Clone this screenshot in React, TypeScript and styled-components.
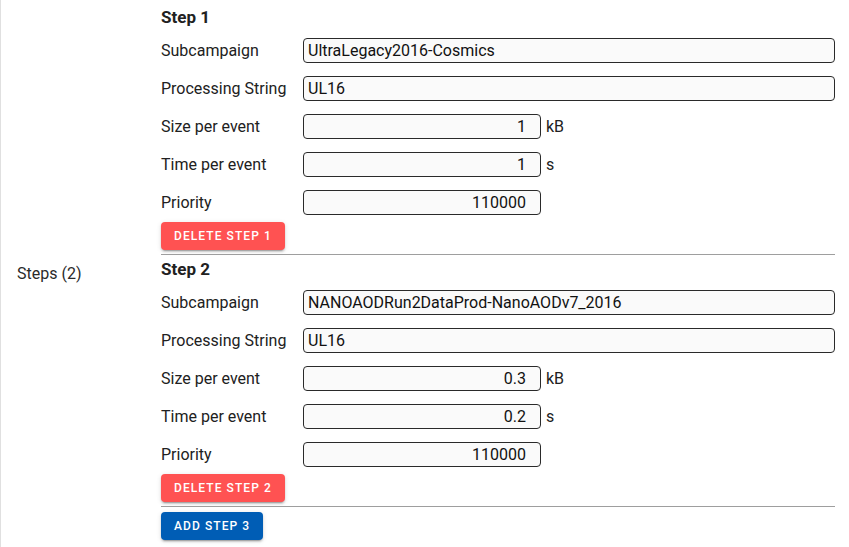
import React from "react";
import styled, { createGlobalStyle } from "styled-components";

const Global = createGlobalStyle`
  html, body { margin: 0; padding: 0; background: #fff; }
  body { font-family: Roboto, "Liberation Sans", sans-serif; color: rgba(0,0,0,0.87); }
`;

const Page = styled.div`
  display: flex;
  align-items: center;
  width: 849px;
  min-height: 547px;
  box-sizing: border-box;
  border-left: 1px solid #e0e0e0;
`;

const SideLabel = styled.div`
  width: 160px;
  box-sizing: border-box;
  padding-left: 16px;
  font-size: 16px;
  color: #2a2a2a;
`;

const Content = styled.div`
  align-self: flex-start;
  width: 674px;
  display: flex;
  flex-direction: column;
  padding-top: 3px;
`;

const Step = styled.div`
  display: flex;
  flex-direction: column;
`;

const StepTitle = styled.div`
  height: 28px;
  display: flex;
  align-items: center;
  font-size: 17px;
  font-weight: 700;
  color: #212121;
`;

const Row = styled.div`
  height: 38px;
  display: flex;
  align-items: center;
`;

const Label = styled.div`
  width: 142px;
  font-size: 16px;
  color: #212121;
`;

const Input = styled.input<{ $short?: boolean }>`
  box-sizing: border-box;
  width: ${(p) => (p.$short ? "238px" : "532px")};
  height: 25px;
  border: 1px solid #2a2a2a;
  border-radius: 4px;
  background: #fafafa;
  font-family: Roboto, "Liberation Sans", sans-serif;
  font-size: 16px;
  color: #111;
  padding: 0 4px;
  text-align: ${(p) => (p.$short ? "right" : "left")};
  padding-right: ${(p) => (p.$short ? "14px" : "4px")};
  outline: none;
`;

const Unit = styled.span`
  margin-left: 5px;
  font-size: 16px;
  color: #212121;
`;

const Button = styled.button<{ $color: string }>`
  align-self: flex-start;
  height: 28px;
  padding: 0 13px;
  border: none;
  border-radius: 4px;
  background: ${(p) => p.$color};
  color: #fff;
  font-family: Roboto, "Liberation Sans", sans-serif;
  font-size: 12px;
  font-weight: 500;
  letter-spacing: 0.09em;
  text-transform: uppercase;
  box-shadow: 0 3px 1px -2px rgba(0,0,0,0.2), 0 2px 2px 0 rgba(0,0,0,0.14), 0 1px 5px 0 rgba(0,0,0,0.12);
  cursor: pointer;
`;

const DeleteButton = styled(Button)`
  margin-top: 1px;
`;

const Divider = styled.hr`
  margin: 4px 0 0;
  border: none;
  border-top: 1px solid #9e9e9e;
  height: 0;
`;

const AddButton = styled(Button)`
  margin-top: 5px;
`;

type StepData = {
  sub: string;
  ps: string;
  size: string;
  time: string;
  priority: string;
};

const steps: StepData[] = [
  { sub: "UltraLegacy2016-Cosmics", ps: "UL16", size: "1", time: "1", priority: "110000" },
  { sub: "NANOAODRun2DataProd-NanoAODv7_2016", ps: "UL16", size: "0.3", time: "0.2", priority: "110000" },
];

export default function App() {
  return (
    <>
      <Global />
      <Page>
        <SideLabel>Steps (2)</SideLabel>
        <Content>
          {steps.map((s, i) => (
            <Step key={i}>
              <StepTitle>Step {i + 1}</StepTitle>
              <Row>
                <Label>Subcampaign</Label>
                <Input defaultValue={s.sub} />
              </Row>
              <Row>
                <Label>Processing String</Label>
                <Input defaultValue={s.ps} />
              </Row>
              <Row>
                <Label>Size per event</Label>
                <Input $short defaultValue={s.size} />
                <Unit>kB</Unit>
              </Row>
              <Row>
                <Label>Time per event</Label>
                <Input $short defaultValue={s.time} />
                <Unit>s</Unit>
              </Row>
              <Row>
                <Label>Priority</Label>
                <Input $short defaultValue={s.priority} />
              </Row>
              <DeleteButton $color="#ff5252">Delete step {i + 1}</DeleteButton>
              <Divider />
            </Step>
          ))}
          <AddButton $color="#005db5">Add step 3</AddButton>
        </Content>
      </Page>
    </>
  );
}
